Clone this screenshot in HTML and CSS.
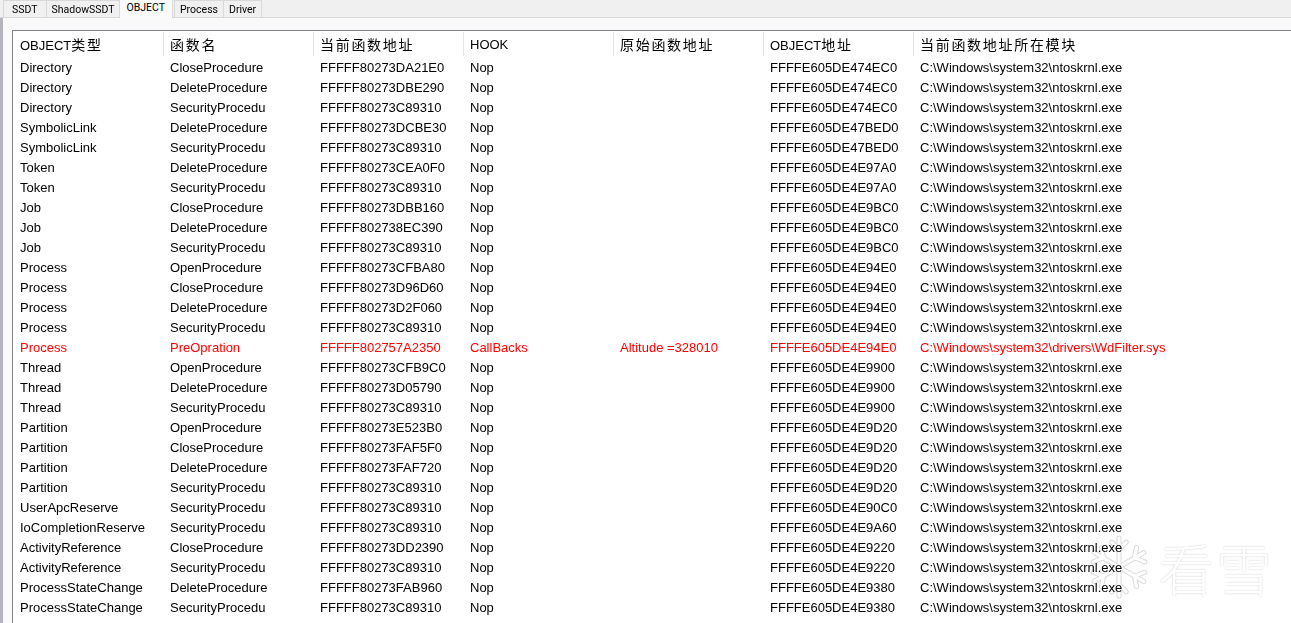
FILE: index.html
```html
<!DOCTYPE html>
<html lang="zh-CN">
<head>
  <meta charset="UTF-8">
  <title>OBJECT</title>
  <link rel="stylesheet" href="styles.css">
</head>
<body>
  <div class="tabs">
    <span class="tab">SSDT</span>
    <span class="tab">ShadowSSDT</span>
    <span class="tab active">OBJECT</span>
    <span class="tab">Process</span>
    <span class="tab">Driver</span>
  </div>

  <div class="panel">
    <div class="list">
      <table>
        <thead>
          <tr>
            <th>OBJECT<span class="zh">类型</span></th>
            <th><span class="zh">函数名</span></th>
            <th><span class="zh">当前函数地址</span></th>
            <th>HOOK</th>
            <th><span class="zh">原始函数地址</span></th>
            <th>OBJECT<span class="zh">地址</span></th>
            <th class="last"><span class="zh">当前函数地址所在模块</span></th>
          </tr>
        </thead>
        <tbody id="rows"></tbody>
      </table>
    </div>
  </div>

  <div class="watermark">
    <svg class="flake" width="66" height="66" viewBox="0 0 64 64">
      <g fill="none" stroke-linecap="round" stroke-linejoin="round">
        <g stroke="#dcdcdc" stroke-width="5">
          <path d="M32 4 V60 M8 18 L56 46 M8 46 L56 18"/>
          <path d="M25 8 L32 15 L39 8 M25 56 L32 49 L39 56"/>
          <path d="M7 27 L17 23 L15 13 M57 37 L47 41 L49 51"/>
          <path d="M7 37 L17 41 L15 51 M57 27 L47 23 L49 13"/>
        </g>
        <g stroke="#fff" stroke-width="3">
          <path d="M32 4 V60 M8 18 L56 46 M8 46 L56 18"/>
          <path d="M25 8 L32 15 L39 8 M25 56 L32 49 L39 56"/>
          <path d="M7 27 L17 23 L15 13 M57 37 L47 41 L49 51"/>
          <path d="M7 37 L17 41 L15 51 M57 27 L47 23 L49 13"/>
        </g>
      </g>
    </svg>
    <span>看雪</span>
  </div>

<script>
  const mod = "C:\\Windows\\system32\\ntoskrnl.exe";
  const data = [
    ["Directory", "CloseProcedure", "FFFFF80273DA21E0", "FFFFE605DE474EC0"],
    ["Directory", "DeleteProcedure", "FFFFF80273DBE290", "FFFFE605DE474EC0"],
    ["Directory", "SecurityProcedu", "FFFFF80273C89310", "FFFFE605DE474EC0"],
    ["SymbolicLink", "DeleteProcedure", "FFFFF80273DCBE30", "FFFFE605DE47BED0"],
    ["SymbolicLink", "SecurityProcedu", "FFFFF80273C89310", "FFFFE605DE47BED0"],
    ["Token", "DeleteProcedure", "FFFFF80273CEA0F0", "FFFFE605DE4E97A0"],
    ["Token", "SecurityProcedu", "FFFFF80273C89310", "FFFFE605DE4E97A0"],
    ["Job", "CloseProcedure", "FFFFF80273DBB160", "FFFFE605DE4E9BC0"],
    ["Job", "DeleteProcedure", "FFFFF802738EC390", "FFFFE605DE4E9BC0"],
    ["Job", "SecurityProcedu", "FFFFF80273C89310", "FFFFE605DE4E9BC0"],
    ["Process", "OpenProcedure", "FFFFF80273CFBA80", "FFFFE605DE4E94E0"],
    ["Process", "CloseProcedure", "FFFFF80273D96D60", "FFFFE605DE4E94E0"],
    ["Process", "DeleteProcedure", "FFFFF80273D2F060", "FFFFE605DE4E94E0"],
    ["Process", "SecurityProcedu", "FFFFF80273C89310", "FFFFE605DE4E94E0"],
    ["Process", "PreOpration", "FFFFF802757A2350", "FFFFE605DE4E94E0", "CallBacks", "Altitude =328010", "C:\\Windows\\system32\\drivers\\WdFilter.sys"],
    ["Thread", "OpenProcedure", "FFFFF80273CFB9C0", "FFFFE605DE4E9900"],
    ["Thread", "DeleteProcedure", "FFFFF80273D05790", "FFFFE605DE4E9900"],
    ["Thread", "SecurityProcedu", "FFFFF80273C89310", "FFFFE605DE4E9900"],
    ["Partition", "OpenProcedure", "FFFFF80273E523B0", "FFFFE605DE4E9D20"],
    ["Partition", "CloseProcedure", "FFFFF80273FAF5F0", "FFFFE605DE4E9D20"],
    ["Partition", "DeleteProcedure", "FFFFF80273FAF720", "FFFFE605DE4E9D20"],
    ["Partition", "SecurityProcedu", "FFFFF80273C89310", "FFFFE605DE4E9D20"],
    ["UserApcReserve", "SecurityProcedu", "FFFFF80273C89310", "FFFFE605DE4E90C0"],
    ["IoCompletionReserve", "SecurityProcedu", "FFFFF80273C89310", "FFFFE605DE4E9A60"],
    ["ActivityReference", "CloseProcedure", "FFFFF80273DD2390", "FFFFE605DE4E9220"],
    ["ActivityReference", "SecurityProcedu", "FFFFF80273C89310", "FFFFE605DE4E9220"],
    ["ProcessStateChange", "DeleteProcedure", "FFFFF80273FAB960", "FFFFE605DE4E9380"],
    ["ProcessStateChange", "SecurityProcedu", "FFFFF80273C89310", "FFFFE605DE4E9380"],
    ["ThreadStateChange", "DeleteProcedure", "FFFFF80273FAB960", "FFFFE605DE4E9AC0"]
  ];

  const tbody = document.getElementById("rows");
  tbody.innerHTML = data.map(r => {
    const hook = r[4] || "Nop";
    const cls = r[4] ? ' class="hooked"' : "";
    return `<tr${cls}><td>${r[0]}</td><td>${r[1]}</td><td>${r[2]}</td><td>${hook}</td><td>${r[5] || ""}</td><td>${r[3]}</td><td>${r[6] || mod}</td></tr>`;
  }).join("");
</script>
</body>
</html>
```

FILE: styles.css
```css
* { box-sizing: border-box; }

html, body {
  margin: 0;
  height: 623px;
  overflow: hidden;
}

body {
  background-color: #f0f0f0;
  font-family: "Liberation Sans", Arial, "Noto Sans CJK SC", sans-serif;
  font-size: 13px;
  color: #000;
}

/* tab strip */
.tabs {
  display: flex;
  align-items: flex-end;
  height: 18px;
  padding-left: 3px;
  border-bottom: 1px solid #d9d9d9;
}
.tab {
  height: 17px;
  padding: 0 5px;
  line-height: 17px;
  font-family: Roboto, "Liberation Sans", sans-serif;
  font-size: 10.5px;
  color: #000;
  background-color: #f0f0f0;
  border: 1px solid #d9d9d9;
  border-bottom: none;
  margin-right: -1px;
}
.tab:first-child {
  padding: 0 8px;
}
.tab.active {
  position: relative;
  height: 19px;
  margin: 0 1px -1px -1px;
  padding: 0 7px;
  line-height: 15px;
  background-color: #fafafa;
  z-index: 1;
}

/* list view */
.panel {
  height: 605px;
  padding: 12px 0 0 9px;
  background-color: #f9f9f9;
  border-left: 3px solid #b4b4bc;
}
.list {
  height: 100%;
  background-color: #fff;
  border-top: 1px solid #82828c;
  border-left: 1px solid #82828c;
  overflow: hidden;
}

table {
  border-collapse: collapse;
  table-layout: fixed;
  width: 100%;
}
th, td {
  width: 150px;
  padding: 0 0 0 7px;
  text-align: left;
  white-space: nowrap;
  overflow: hidden;
}
th.last {
  width: auto;
}
th {
  height: 26px;
  padding-top: 1px;
  font-weight: normal;
  font-size: 13px;
  line-height: 24px;
  position: relative;
}
th + th::before {
  content: "";
  position: absolute;
  left: 0;
  top: 1px;
  height: 24px;
  border-left: 1px solid #e5e5e5;
}
th .zh {
  font-family: "Noto Sans CJK SC", sans-serif;
  font-size: 14px;
  letter-spacing: 1.7px;
}
td {
  height: 20px;
  line-height: 20px;
}
tr.hooked td {
  color: #ff0000;
}

/* watermark, drawn over the list */
.watermark {
  position: absolute;
  left: 1086px;
  top: 526px;
  display: flex;
  align-items: center;
  gap: 6px;
  mix-blend-mode: multiply;
}
.watermark span {
  font-family: "Noto Sans CJK SC", sans-serif;
  font-size: 56px;
  font-weight: 300;
  letter-spacing: 2px;
  color: #fff;
  text-shadow: 0 0 2px rgba(0, 0, 0, 0.16), 0 0 1px rgba(0, 0, 0, 0.12);
}
```
